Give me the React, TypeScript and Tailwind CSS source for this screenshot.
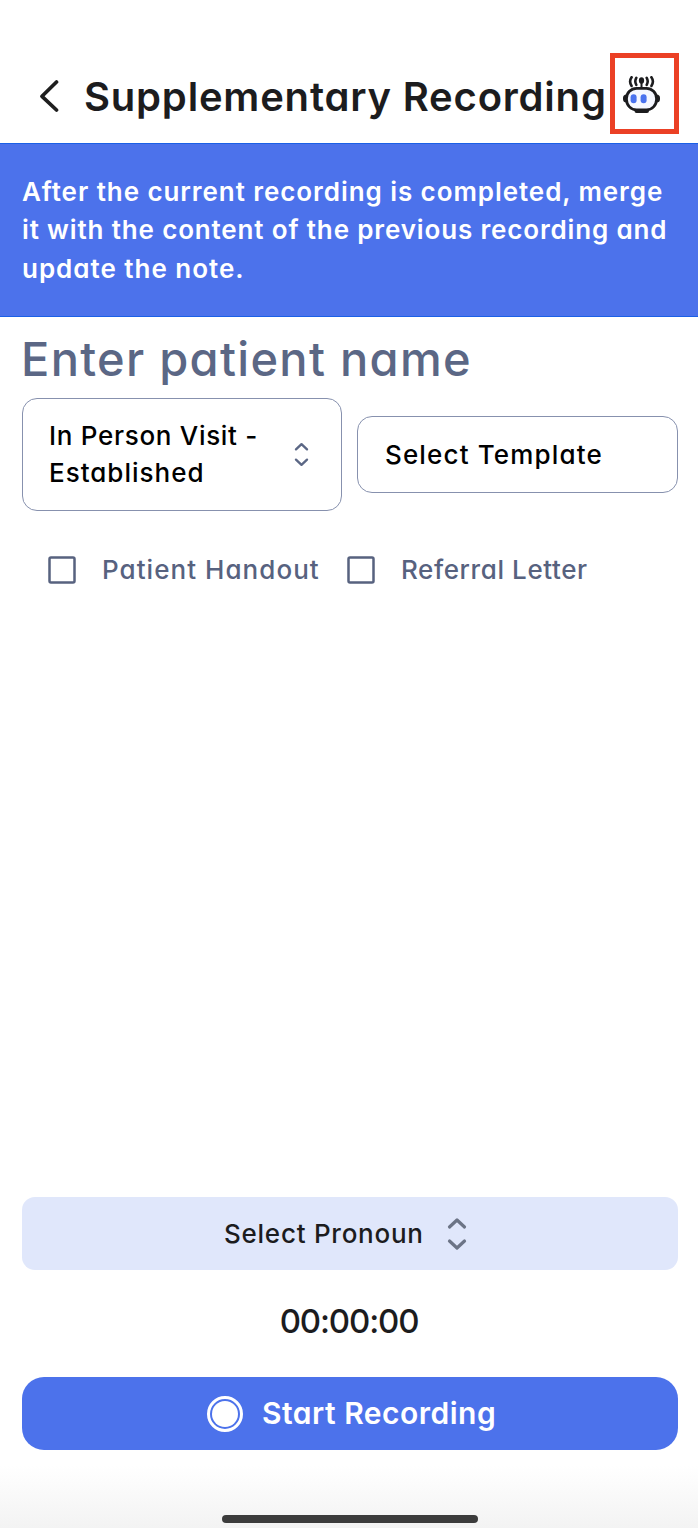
import { useState } from "react";

interface CheckOptionProps {
  label: string;
  className: string;
  checked: boolean;
  onToggle: () => void;
}

function BackIcon() {
  return (
    <svg width="20" height="34" viewBox="0 0 20 34" fill="none">
      <path
        d="M17.500 3 3 17.300 17.500 31"
        stroke="#1f1f1f"
        strokeWidth="3.700"
        strokeLinecap="round"
        strokeLinejoin="round"
      />
    </svg>
  );
}

function RobotIcon() {
  return (
    <svg width="38" height="38" viewBox="0 0 38 38" fill="none">
      {/* antenna and signal waves */}
      <path d="M18.500 5v7" stroke="#1c1c1e" strokeWidth="2" />
      <ellipse cx="18.500" cy="4.600" rx="2.600" ry="3.300" fill="#1c1c1e" />
      <path
        d="M13.300 1.800q-2 3.400 0 7M8.600 1.200q-3 4.200 0 8.800M23.700 1.800q2 3.400 0 7M28.400 1.200q3 4.200 0 8.800"
        stroke="#1c1c1e"
        strokeWidth="2.600"
        strokeLinecap="round"
      />
      {/* ears, base and head */}
      <rect x="0" y="18.500" width="37" height="8" rx="3.500" fill="#1c1c1e" />
      <path d="M11.500 32h14.500v3q0 2-2 2H13.500q-2 0-2-2z" fill="#1c1c1e" />
      <rect x="3.500" y="12.300" width="30" height="21.500" rx="10" fill="#f5f7ff" stroke="#1c1c1e" strokeWidth="2.800" />
      <rect x="7.600" y="18.300" width="6" height="9" rx="3" fill="#4a72ee" />
      <rect x="17.600" y="18.300" width="6" height="9" rx="3" fill="#4a72ee" />
    </svg>
  );
}

function SortIcon({ className }: { className: string }) {
  return (
    <svg className={className} viewBox="0 0 20 34" fill="none">
      <path
        d="M2.500 10 10 3l7.500 7M2.500 24l7.500 7 7.500-7"
        stroke="currentColor"
        strokeWidth="3.200"
        strokeLinecap="round"
        strokeLinejoin="round"
      />
    </svg>
  );
}

function CheckOption({ label, className, checked, onToggle }: CheckOptionProps) {
  return (
    <button onClick={onToggle} className="flex items-center text-[#57627f]">
      <svg width="28" height="28" viewBox="0 0 28 28" fill="none">
        <rect x="1.500" y="1.500" width="25" height="25" rx="1.500" stroke="currentColor" strokeWidth="2.500" />
        {checked && <path d="m7 14 5 5 9-10" stroke="currentColor" strokeWidth="2.500" />}
      </svg>
      <span className={className}>{label}</span>
    </button>
  );
}

export default function App() {
  const [handout, setHandout] = useState(false);
  const [referral, setReferral] = useState(false);

  return (
    <div className="flex h-[1528px] w-[698px] flex-col overflow-hidden bg-white font-['Inter',sans-serif] font-medium whitespace-nowrap text-[#1c1c1e] [font-feature-settings:'cv11']">
      <header className="flex h-[143px] shrink-0 items-start pt-[53px]">
        <button aria-label="Back" className="mt-[26px] ml-[39px]">
          <BackIcon />
        </button>
        <h1 className="ml-[25px] w-[526px] text-[40px] leading-[87px] font-semibold tracking-[0.800px]">
          <span>Supplementary Recording</span>
        </h1>
        <div className="flex h-[81px] w-[69px] shrink-0 items-center justify-center border-[5px] border-[#eb4025] pr-[6px] pt-[3px]">
          <RobotIcon />
        </div>
      </header>

      <p className="h-[174px] shrink-0 border-y border-[#1b60e6] bg-[#4c72eb] px-[22px] pt-[29px] text-[26px] leading-[38.4px] font-semibold text-white">
        <span className="tracking-[0.930px]">After the current recording is completed, merge</span>
        <br />
        <span className="tracking-[0.850px]">it with the content of the previous recording and</span>
        <br />
        <span className="tracking-[0.980px]">update the note.</span>
      </p>

      <div className="h-[81px] shrink-0 px-[21px] text-[47px] leading-[83px] font-[450] tracking-[1.300px] text-[#5b6785]">
        <span>Enter patient name</span>
      </div>

      <div className="flex shrink-0 items-center gap-[15px] px-[22px] text-[26px] text-black">
        <button className="flex h-[113px] w-[320px] shrink-0 items-center justify-between rounded-[15px] border border-[#8791ae] pr-[32px] pb-px pl-[26px] text-left leading-[37px]">
          <span>
            <span className="tracking-[0.700px]">In Person Visit -</span>
            <br />
            <span className="tracking-[1px]">Established</span>
          </span>
          <SortIcon className="h-[25px] w-[15px] text-[#5b6785]" />
        </button>
        <button className="flex h-[77px] w-[321px] shrink-0 items-center rounded-[15px] border border-[#8791ae] pb-px pl-[27px] text-left tracking-[1.150px]">
          <span>Select Template</span>
        </button>
      </div>

      <div className="mt-[39px] flex shrink-0 items-center pl-12 text-[26px] font-[550]">
        <div className="w-[299px]">
          <CheckOption label="Patient Handout" className="ml-[26px] tracking-[1.050px]" checked={handout} onToggle={() => setHandout(!handout)} />
        </div>
        <CheckOption label="Referral Letter" className="ml-[26px] tracking-[0.600px]" checked={referral} onToggle={() => setReferral(!referral)} />
      </div>

      <footer className="mt-auto flex shrink-0 flex-col pr-5 pl-[22px]">
        <button className="flex h-[73px] items-center rounded-[13px] bg-[#e0e7fb] pl-[202px] text-[26px]">
          <span className="w-[223px] text-left tracking-[0.750px]">Select Pronoun</span>
          <SortIcon className="h-[34px] w-5 text-[#6c7486]" />
        </button>
        <div className="flex h-[107px] items-center justify-center pr-[2px] pb-1 text-[33px] tracking-[-1.150px]">
          <span>00:00:00</span>
        </div>
        <button className="flex h-[73px] items-center rounded-[22px] bg-[#4c72eb] pl-[185px] text-[30px] font-semibold text-white">
          <span className="flex h-9 w-9 items-center justify-center rounded-full border-[3px] border-white">
            <span className="h-[26px] w-[26px] rounded-full bg-white" />
          </span>
          <span className="ml-[19px] tracking-[0.500px]">Start Recording</span>
        </button>
      </footer>
      <div className="flex h-[78px] shrink-0 items-end justify-center bg-linear-to-b from-white from-20% to-[#f3f3f3] pb-[5px] pl-[2px]">
        <div className="h-2 w-64 rounded-full bg-[#3c3c3c]" />
      </div>
    </div>
  );
}
